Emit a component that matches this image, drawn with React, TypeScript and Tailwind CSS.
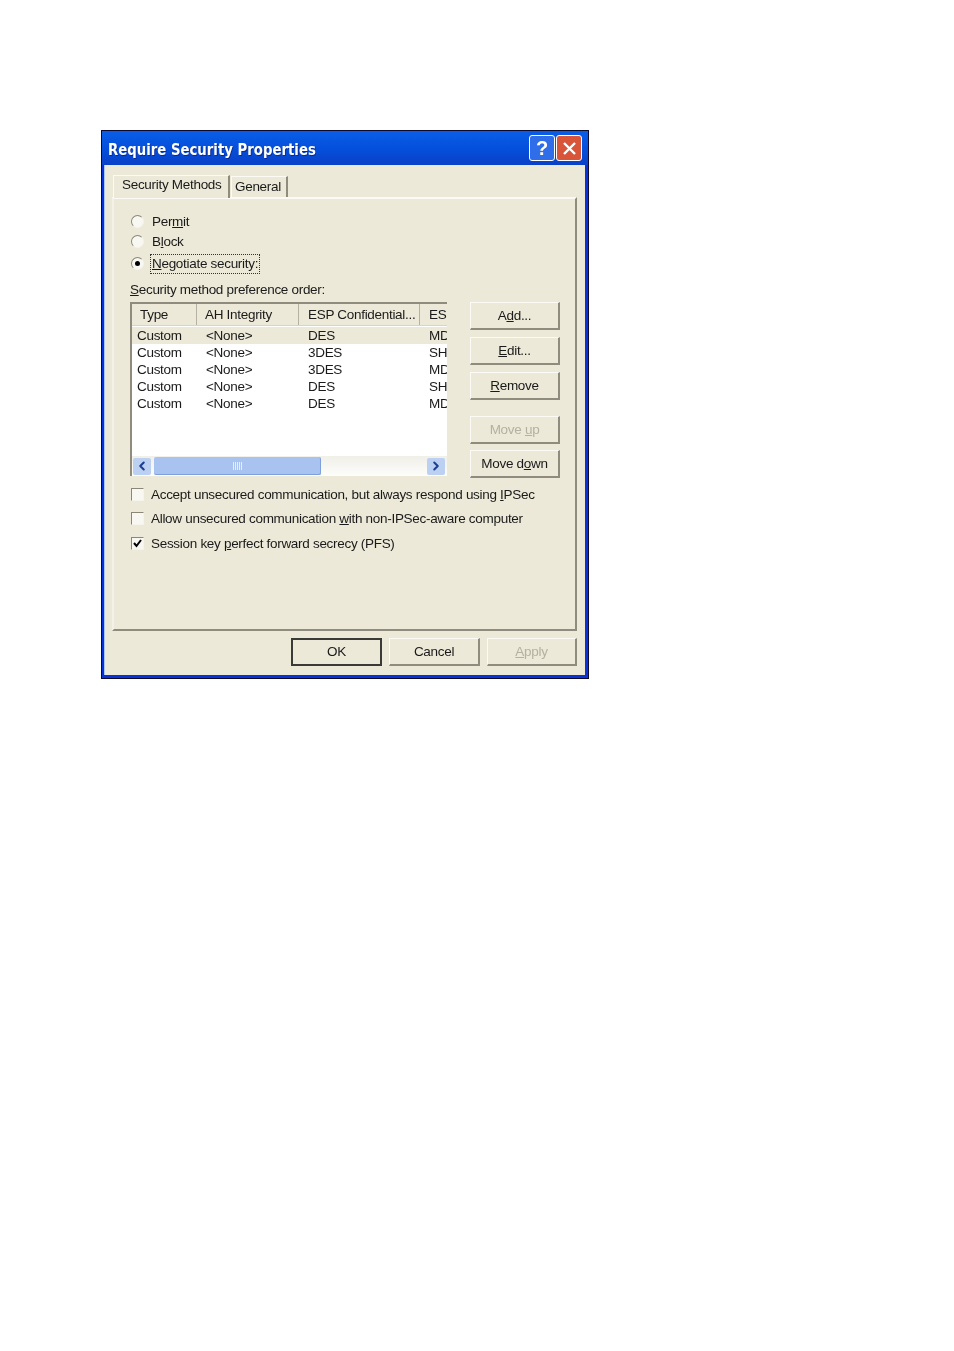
import { ChevronLeft, ChevronRight } from 'lucide-react';
import type { ReactNode } from 'react';

const rows = [
  ['Custom', '<None>', 'DES', 'MD5'],
  ['Custom', '<None>', '3DES', 'SHA1'],
  ['Custom', '<None>', '3DES', 'MD5'],
  ['Custom', '<None>', 'DES', 'SHA1'],
  ['Custom', '<None>', 'DES', 'MD5'],
];

function Radio({ checked }: Readonly<{ checked?: boolean }>) {
  return (
    <span className="w-[13px] h-[13px] -mt-[2px] rounded-full border border-t-[#8a8778] border-l-[#8a8778] border-r-[#f4f3ec] border-b-[#f4f3ec] bg-[#f8f7f1] flex items-center justify-center shrink-0">
      {checked && <span className="w-[5px] h-[5px] rounded-full bg-black" />}
    </span>
  );
}

function Check({ checked }: Readonly<{ checked?: boolean }>) {
  return (
    <span className="w-[13px] h-[13px] -mt-[1px] border border-t-[#8a8778] border-l-[#8a8778] border-r-[#f4f3ec] border-b-[#f4f3ec] bg-[#f8f7f1] flex items-center justify-center shrink-0">
      {checked && (
        <svg width="11" height="11" viewBox="0 0 11 11">
          <path d="M2 5 L4.5 8 L9 2" fill="none" stroke="#000" strokeWidth="2" />
        </svg>
      )}
    </span>
  );
}

function Btn({
  children,
  disabled,
  isDefault,
  className,
}: Readonly<{ children: ReactNode; disabled?: boolean; isDefault?: boolean; className: string }>) {
  const edge = isDefault
    ? 'border-2 border-[#3a3a36]'
    : 'border-t border-l border-t-[#fbfaf5] border-l-[#fbfaf5] border-r-2 border-b-2 border-r-[#8f8c7d] border-b-[#8f8c7d]';
  return (
    <button
      type="button"
      className={`h-[28px] flex items-center justify-center bg-[#ece9d8] ${edge} ${
        disabled ? 'text-[#b4b1a2]' : 'text-[#1a1a1a]'
      } ${className}`}
    >
      {children}
    </button>
  );
}

function HeaderCell({ label, className }: Readonly<{ label: string; className: string }>) {
  return (
    <div className={`h-full flex items-center shrink-0 whitespace-nowrap border-r border-[#b5b2a3] bg-[#ece9d8] ${className}`}>
      {label}
    </div>
  );
}

function MethodList() {
  return (
    <div className="w-[317px] h-[174px] border-t-2 border-l-2 border-t-[#8f8c7d] border-l-[#8f8c7d] flex flex-col overflow-hidden bg-white">
      <div className="h-[22px] flex shrink-0 text-[#1a1a1a] border-b border-[#d8d5c5]">
        <HeaderCell label="Type" className="w-[65px] pl-[8px]" />
        <HeaderCell label="AH Integrity" className="w-[102px] pl-[8px]" />
        <HeaderCell label="ESP Confidential..." className="w-[121px] pl-[9px]" />
        <div className="flex-1 h-full flex items-center pl-[9px] bg-[#ece9d8]">ES</div>
      </div>
      <div className="flex-1 pt-[1px]">
        {rows.map((row, i) => (
          <div
            key={i}
            className={`h-[17px] flex items-center text-[#1a1a1a] ${i === 0 ? 'bg-[#ece9d8]' : ''}`}
          >
            <span className="w-[65px] pl-[5px] shrink-0">{row[0]}</span>
            <span className="w-[102px] pl-[9px] shrink-0">{row[1]}</span>
            <span className="w-[121px] pl-[9px] shrink-0">{row[2]}</span>
            <span className="w-[27px] pl-[9px] shrink-0 overflow-hidden whitespace-nowrap">{row[3]}</span>
          </div>
        ))}
      </div>
      <div className="h-[20px] shrink-0 flex items-center bg-gradient-to-b from-[#f0efe8] to-[#fdfdfb] pl-[1px] pr-[2px]">
        <span className="w-[18px] h-[17px] rounded-[2px] bg-[#bcd0f2] flex items-center justify-center text-[#1c3f94]">
          <ChevronLeft size={14} strokeWidth={3.5} />
        </span>
        <span className="w-[167px] h-[18px] ml-[3px] rounded-[2px] bg-[#a9c3f1] border-r border-b border-[#7f9fdc] flex items-center justify-center">
          <svg width="9" height="8" viewBox="0 0 9 8">
            <path d="M0.5 0V8M2.5 0V8M4.5 0V8M6.5 0V8M8.5 0V8" stroke="#e6eefc" strokeWidth="1" />
          </svg>
        </span>
        <span className="ml-auto w-[18px] h-[17px] rounded-[2px] bg-[#bcd0f2] flex items-center justify-center text-[#1c3f94]">
          <ChevronRight size={14} strokeWidth={3.5} />
        </span>
      </div>
    </div>
  );
}

export default function App() {
  return (
    <div className="w-[954px] h-[1351px] bg-white pt-[130px] pl-[101px] text-[13.5px] leading-none font-['Liberation_Sans',Arial,sans-serif] tracking-[-0.3px]">
      <div className="w-[488px] h-[549px] border border-[#0a0a30] bg-[#0831d9] flex flex-col blur-[0.3px]">
        <div className="h-[34px] shrink-0 flex items-center bg-gradient-to-b from-[#0b5de6] via-[#0450dc] to-[#0a40c8] pl-[6px] pr-[6px]">
          <span className="text-white font-bold text-[16px] tracking-normal pt-[4px] font-['DejaVu_Sans',sans-serif] scale-x-[0.83] origin-left whitespace-nowrap [text-shadow:1px_1px_0_#0a2a90]">
            Require Security Properties
          </span>
          <span className="ml-auto w-[26px] h-[26px] rounded-[3px] border border-white bg-[#2f6ee8] flex items-center justify-center text-white font-bold text-[20px]">
            ?
          </span>
          <span className="ml-[1px] w-[26px] h-[26px] rounded-[3px] border border-white bg-[#d8553a] flex items-center justify-center">
            <svg width="15" height="15" viewBox="0 0 15 15">
              <path d="M2 2 L13 13 M13 2 L2 13" stroke="#fff" strokeWidth="2.4" />
            </svg>
          </span>
        </div>
        <div className="flex-1 ml-[2px] mr-[3px] mb-[3px] bg-[#ece9d8] border-l border-[#a9c6f5] flex flex-col">
          <div className="h-[32px] shrink-0 flex items-end pl-[8px] text-[#1a1a1a]">
            <div className="h-[23px] w-[117px] -mb-[1px] flex items-center pl-[8px] pb-[4px] border-t border-l border-[#fbfaf5] border-r-2 border-r-[#8f8c7d] bg-[#ece9d8] z-10">
              Security Methods
            </div>
            <div className="h-[21px] w-[57px] flex items-center pl-[3px] border-t border-l border-[#fbfaf5] border-r-2 border-r-[#8f8c7d] ml-[1px]">
              General
            </div>
          </div>
          <div className="w-[465px] h-[434px] ml-[7px] border-t-2 border-l-2 border-t-[#fbfaf5] border-l-[#f4f2e8] border-r-2 border-b-2 border-r-[#8f8c7d] border-b-[#8f8c7d] pl-[16px] pt-[13px] text-[#1a1a1a]">
            <div className="flex items-center gap-[8px] h-[20px] pl-[1px]">
              <Radio />
              <span>
                Per<u>m</u>it
              </span>
            </div>
            <div className="flex items-center gap-[8px] h-[20px] pl-[1px]">
              <Radio />
              <span>
                B<u>l</u>ock
              </span>
            </div>
            <div className="flex items-center gap-[6px] h-[22px] mt-[1px] pl-[1px]">
              <Radio checked />
              <span className="border border-dotted border-[#333] px-[1px] py-[2px]">
                <u>N</u>egotiate security:
              </span>
            </div>
            <div className="mt-[5px] h-[20px] flex items-center">
              <span>
                <u>S</u>ecurity method preference order:
              </span>
            </div>
            <div className="mt-[2px] flex">
              <MethodList />
              <div className="ml-[23px] w-[90px] flex flex-col">
                <Btn className="w-[90px]">
                  <span>
                    A<u>d</u>d...
                  </span>
                </Btn>
                <Btn className="w-[90px] mt-[7px]">
                  <span>
                    <u>E</u>dit...
                  </span>
                </Btn>
                <Btn className="w-[90px] mt-[7px]">
                  <span>
                    <u>R</u>emove
                  </span>
                </Btn>
                <Btn disabled className="w-[90px] mt-[16px]">
                  <span>
                    Move <u>u</u>p
                  </span>
                </Btn>
                <Btn className="w-[90px] mt-[6px]">
                  <span>
                    Move d<u>o</u>wn
                  </span>
                </Btn>
              </div>
            </div>
            <div className="mt-[5px] flex items-center gap-[7px] h-[24px] pl-[1px]">
              <Check />
              <span>
                Accept unsecured communication, but always respond using <u>I</u>PSec
              </span>
            </div>
            <div className="flex items-center gap-[7px] h-[24px] pl-[1px]">
              <Check />
              <span>
                Allow unsecured communication <u>w</u>ith non-IPSec-aware computer
              </span>
            </div>
            <div className="mt-[1px] flex items-center gap-[7px] h-[24px] pl-[1px]">
              <Check checked />
              <span>
                Session key <u>p</u>erfect forward secrecy (PFS)
              </span>
            </div>
          </div>
          <div className="flex justify-end mt-[7px] pr-[8px] gap-[7px]">
            <Btn isDefault className="w-[91px]">
              OK
            </Btn>
            <Btn className="w-[91px]">Cancel</Btn>
            <Btn disabled className="w-[90px]">
              <span>
                <u>A</u>pply
              </span>
            </Btn>
          </div>
        </div>
      </div>
    </div>
  );
}
